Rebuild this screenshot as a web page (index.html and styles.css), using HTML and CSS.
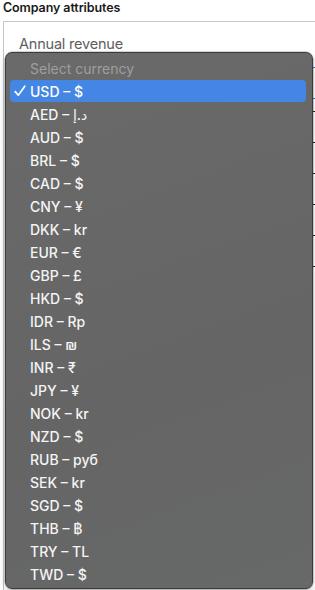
FILE: index.html
```html
<!DOCTYPE html>
<html lang="en">
<head>
<meta charset="utf-8">
<title>Company attributes</title>
<link rel="stylesheet" href="styles.css">
</head>
<body>
<div class="page">
  <h2 class="title">Company attributes</h2>
  <section class="card">
    <div class="label">Annual revenue</div>
    <div class="field"></div>
    <div class="rows">
      <div class="row"></div>
      <div class="row"></div>
      <div class="row"></div>
      <div class="row"></div>
      <div class="row"></div>
      <div class="row"></div>
    </div>
  </section>
</div>
<div class="menu">
  <div class="opt placeholder">Select currency</div>
  <div class="opt selected"><svg class="check" width="12" height="12" viewBox="0 0 12 12"><path d="M1.2 6.6 L4.3 10.2 L10.8 1.2" fill="none" stroke="#ffffff" stroke-width="1.7" stroke-linecap="round" stroke-linejoin="round"/></svg>USD – $</div>
  <div class="opt">AED – د.إ</div>
  <div class="opt">AUD – $</div>
  <div class="opt">BRL – $</div>
  <div class="opt">CAD – $</div>
  <div class="opt">CNY – ¥</div>
  <div class="opt">DKK – kr</div>
  <div class="opt">EUR – €</div>
  <div class="opt">GBP – £</div>
  <div class="opt">HKD – $</div>
  <div class="opt">IDR – Rp</div>
  <div class="opt">ILS – ₪</div>
  <div class="opt">INR – ₹</div>
  <div class="opt">JPY – ¥</div>
  <div class="opt">NOK – kr</div>
  <div class="opt">NZD – $</div>
  <div class="opt">RUB – руб</div>
  <div class="opt">SEK – kr</div>
  <div class="opt">SGD – $</div>
  <div class="opt">THB – ฿</div>
  <div class="opt">TRY – TL</div>
  <div class="opt">TWD – $</div>
</div>
</body>
</html>
```
FILE: styles.css
```css
html, body {
  margin: 0;
  padding: 0;
  background: #ffffff;
  overflow: hidden;
}
body {
  width: 315px;
  height: 590px;
  position: relative;
  font-family: Inter, "Noto Sans", "DejaVu Sans", sans-serif;
}
.page {
  height: 590px;
  overflow: hidden;
  padding: 0 0 0 3px;
  box-sizing: border-box;
}
.title {
  margin: 0;
  padding: 1px 0 0 0;
  height: 20px;
  font-size: 12.5px;
  line-height: 14px;
  font-weight: 600;
  color: #1a1a1a;
  letter-spacing: -0.1px;
}
.card {
  border: 1px solid #c6c6c6;
  border-right: none;
  border-bottom: none;
  height: 569px;
  padding: 13px 0 0 15px;
  box-sizing: border-box;
}
.label {
  font-size: 14.5px;
  line-height: 18px;
  color: #5e5e5e;
  letter-spacing: -0.2px;
}
.field {
  margin-top: 14px;
  height: 30px;
  border: 1px solid #2f7bd8;
  border-right: none;
  border-radius: 3px 0 0 3px;
}
.rows {
  display: flex;
  flex-direction: column;
  margin-top: 12px;
}
.row {
  height: 30px;
  border-top: 1px solid #222;
}
.menu {
  position: absolute;
  left: 5px;
  top: 52px;
  width: 308px;
  height: 537px;
  box-sizing: border-box;
  padding: 4px 6px 0 4px;
  background: linear-gradient(160deg, #6a6a6a 0%, #656565 60%, #676868 100%);
  border: 1px solid #3b3b3b;
  border-radius: 7px;
  box-shadow: 0 0 0 0.5px rgba(0,0,0,0.3), 0 3px 6px rgba(0,0,0,0.2);
  display: flex;
  flex-direction: column;
  gap: 1px;
  overflow: hidden;
}
.opt {
  height: 22px;
  flex: none;
  padding-left: 20px;
  font-size: 14px;
  font-weight: 500;
  color: #f4f4f4;
  border-radius: 4px;
  white-space: nowrap;
  display: flex;
  align-items: center;
}
.placeholder {
  color: #9e9e9e;
  font-weight: 400;
}
.selected {
  background: #4486e4;
  color: #ffffff;
  padding-left: 4px;
}
.check {
  width: 12px;
  height: 12px;
  margin-right: 4px;
  flex: none;
}
```
